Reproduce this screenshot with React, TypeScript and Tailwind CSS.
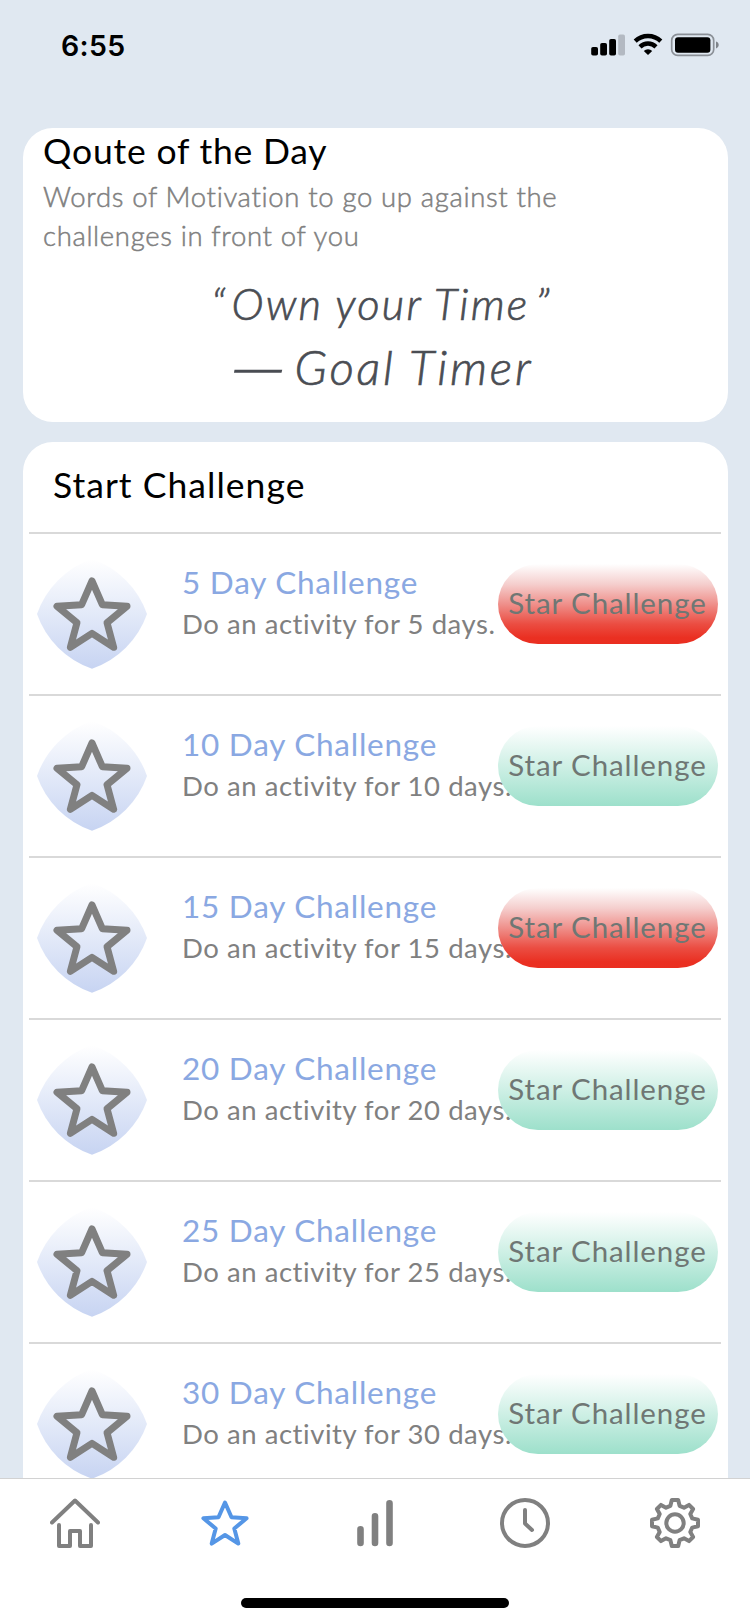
const STAR =
  "M165 64 L196 135 L270 140 L210 189 L230 263 L165 221 L100 263 L120 189 L60 140 L134 135 Z";

const challenges = [
  { days: 5, tone: "red" },
  { days: 10, tone: "mint" },
  { days: 15, tone: "red" },
  { days: 20, tone: "mint" },
  { days: 25, tone: "mint" },
  { days: 30, tone: "mint" },
];

function StatusBar() {
  return (
    <header className="flex h-32 shrink-0 items-start justify-between pl-[61px] pr-[29px] pt-[33px]">
      <span className="pt-px font-['Inter'] text-[28.5px] font-semibold leading-[24px] tracking-[0.3px] text-black">6:55</span>
      <svg className="h-[24px] w-[132px]" viewBox="0 0 132 24">
        <rect x="2.2" y="14" width="6.8" height="8.5" rx="1.8" />
        <rect x="11.2" y="10" width="6.8" height="12.5" rx="1.8" />
        <rect x="20.2" y="6" width="6.8" height="16.5" rx="1.8" />
        <rect x="29.2" y="1.5" width="6.8" height="21" rx="1.8" fill="#b3b9c2" />
        <g fill="none" stroke="#000" strokeWidth="4.4">
          <path d="M46.2 8.2 A18.5 18.5 0 0 1 71.8 8.2" />
          <path d="M51 13.8 A11.5 11.5 0 0 1 67 13.8" />
        </g>
        <path d="M59 22 L54.8 17.9 A6 6 0 0 1 63.2 17.9 Z" />
        <rect x="82.7" y="1.4" width="42" height="21" rx="6" fill="none" stroke="#8b9097" strokeWidth="1.7" />
        <rect x="86" y="4.3" width="35.4" height="15.4" rx="3" />
        <path d="M127 8.6 C130.6 9.6 130.6 14.4 127 15.4 Z" fill="#7f848a" />
      </svg>
    </header>
  );
}

function Badge() {
  return (
    <svg className="mt-[25px] h-[110px] w-[110px] shrink-0" viewBox="0 0 330 330">
      <defs>
        <linearGradient id="badge" x1="0" y1="0" x2="0" y2="1">
          <stop offset="0" stopColor="#ffffff" />
          <stop offset="1" stopColor="#c7d4f2" />
        </linearGradient>
      </defs>
      <path d="M0 165 A266 266 0 0 1 165 0 A266 266 0 0 1 330 165 A266 266 0 0 1 165 329 A266 266 0 0 1 0 165 Z" fill="url(#badge)" />
      <path d={STAR} transform="translate(0 2)" fill="none" stroke="#808080" strokeWidth="21" strokeLinejoin="round" />
    </svg>
  );
}

function ChallengeRow({ days, tone }: { days: number; tone: string }) {
  return (
    <li className="relative flex h-[162px] items-start border-t-2 border-[#d9d9d9] pl-2">
      <Badge />
      <div className="ml-[35px] mt-[28px] whitespace-nowrap">
        <h3 className="text-[31.5px] leading-[40px] tracking-[0.75px] text-[#8aa8e2]">{days} Day Challenge</h3>
        <p className="pt-[2px] text-[27.5px] leading-[40px] tracking-[0.55px] text-[#808080]">Do an activity for {days} days.</p>
      </div>
      <button
        className={
          tone === "red"
            ? "absolute right-[3px] top-[30px] h-20 w-[220px] rounded-[40px] bg-[linear-gradient(to_bottom,#ffffff,#f5cfce_25%,#ef908b_50%,#eb4d42_75%,#ea3022_92%,#ea2e20)] pb-[2px] pr-px whitespace-nowrap text-[29.5px] tracking-[0.9px] text-[#6f7774]"
            : "absolute right-[3px] top-[30px] h-20 w-[220px] rounded-[40px] bg-[linear-gradient(to_bottom,#ffffff,#9de0cb)] pb-[2px] pr-px whitespace-nowrap text-[29.5px] tracking-[0.9px] text-[#6f7774]"
        }
      >
        Star Challenge
      </button>
    </li>
  );
}

function TabBar() {
  return (
    <nav className="relative h-[146px] shrink-0 border-t border-[#d2d2d2] bg-white">
      <div className="grid grid-cols-5 justify-items-center pt-[19px] text-[#808080]">
        <svg className="h-[50px] w-[50px]" viewBox="0 0 50 50" fill="none" stroke="currentColor" strokeWidth="4" strokeLinecap="round" strokeLinejoin="round">
          <path d="M2 24.5 L25 2.5 L48 24.5" />
          <path d="M9 27 V48 H20 V33 H30 V48 H41 V27" />
        </svg>
        <svg className="h-[50px] w-[50px] text-[#5596e6]" viewBox="0 0 50 50" fill="none" stroke="currentColor" strokeWidth="4" strokeLinejoin="round">
          <path d="M25 4.5 L31.5 19.3 L46.6 20.3 L34.3 30.5 L38.3 45.6 L25 37 L11.7 45.6 L15.7 30.5 L3.4 20.3 L18.5 19.3 Z" />
        </svg>
        <svg className="h-[50px] w-[50px]" viewBox="0 0 50 50" fill="none" stroke="currentColor" strokeWidth="6.6" strokeLinecap="round">
          <path d="M10.5 31.3 V45 M25 18.3 V45 M39.5 5.2 V45" />
        </svg>
        <svg className="h-[50px] w-[50px]" viewBox="0 0 50 50" fill="none" stroke="currentColor" strokeWidth="4" strokeLinecap="round" strokeLinejoin="round">
          <circle cx="25" cy="25" r="23" />
          <path d="M25 12 V25.5 L32 32" />
        </svg>
        <svg className="h-[50px] w-[50px]" viewBox="0 0 50 50" fill="none" stroke="currentColor" strokeWidth="4" strokeLinejoin="round">
          <circle cx="25" cy="25" r="8.7" />
          <path d="M21.8 2 H28.2 L29.6 7.8 L34 9.7 L39 6.9 L43.1 11 L40.3 16 L42.2 20.4 L48 21.8 V28.2 L42.2 29.6 L40.3 34 L43.1 39 L39 43.1 L34 40.3 L29.6 42.2 L28.2 48 H21.8 L20.4 42.2 L16 40.3 L11 43.1 L6.9 39 L9.7 34 L7.8 29.6 L2 28.2 V21.8 L7.8 20.4 L9.7 16 L6.9 11 L11 6.9 L16 9.7 L20.4 7.8 Z" />
        </svg>
      </div>
      <div className="mx-auto mt-[50px] h-[10px] w-[268px] rounded-full bg-black" />
    </nav>
  );
}

export default function App() {
  return (
    <div className="flex h-[1624px] w-[750px] flex-col overflow-hidden bg-[#e0e8f1] font-['Lato',sans-serif]">
      <StatusBar />
      <main className="flex min-h-0 flex-1 flex-col gap-5 overflow-hidden pl-[23px] pr-[22px]">
        <section className="h-[294px] shrink-0 rounded-[30px] bg-white pl-5">
          <h2 className="text-[35.5px] leading-[46px] tracking-[0.8px] text-black">Qoute of the Day</h2>
          <p className="whitespace-nowrap pt-[3px] text-[27.5px] font-light leading-[39px] tracking-[0.66px] text-[#808080] [-webkit-text-stroke:0.5px_#808080]">
            Words of Motivation to go up against the
            <br />
            challenges in front of you
          </p>
          <blockquote className="text-center font-light italic text-[#4a4d53] [-webkit-text-stroke:0.7px_#4a4d53]">
            <p className="pr-[8px] pt-[16px] text-[43.5px] leading-[64px] tracking-[2.2px]">
              <span className="mr-1">“</span>Own your Time<span className="ml-[6px]">”</span>
            </p>
            <p className="flex justify-center gap-[4px] pl-[15px] text-[47.5px] leading-[63px] tracking-[2.8px]">
              <span className="origin-right scale-x-[1.6] [-webkit-text-stroke:1.4px_#4a4d53]">—</span>
              <span>Goal Timer</span>
            </p>
          </blockquote>
        </section>
        <section className="h-[1200px] shrink-0 rounded-t-[30px] bg-white pl-[6px] pr-[7px]">
          <h2 className="h-[90px] pl-[24px] pt-[20px] text-[35.5px] leading-[46px] tracking-[1.03px] text-black">Start Challenge</h2>
          <ul>
            {challenges.map((c) => (
              <ChallengeRow key={c.days} days={c.days} tone={c.tone} />
            ))}
          </ul>
        </section>
      </main>
      <TabBar />
    </div>
  );
}
